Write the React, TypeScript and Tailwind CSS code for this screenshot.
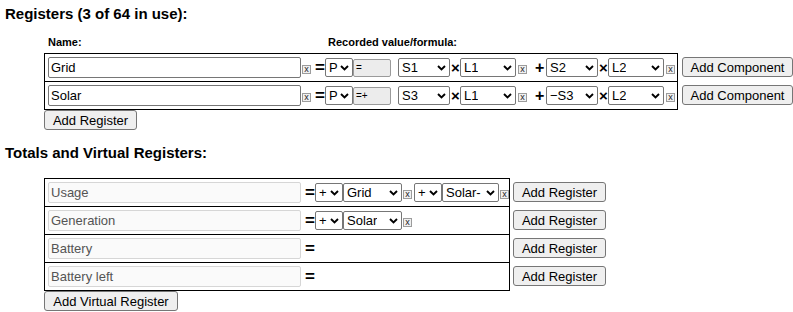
import React from "react";

// small chevron like the native select arrow
function Chevron() {
  return (
    <svg width="9" height="6" viewBox="0 0 9 6" className="shrink-0">
      <path d="M1 1 L4.5 4.5 L8 1" fill="none" stroke="#000" strokeWidth="1.9" />
    </svg>
  );
}

function Select({ value, w }: { value: string; w: string }) {
  return (
    <div
      className={`${w} h-[19px] shrink-0 border border-[#767676] rounded-[2px] bg-white flex items-center justify-between pl-[3px] pr-[3px] text-[13px] leading-none`}
    >
      <span className="whitespace-nowrap overflow-hidden">{value}</span>
      <Chevron />
    </div>
  );
}

function XBox({ ml }: { ml: string }) {
  return (
    <span
      className={`${ml} w-[9px] h-[9px] mt-[4px] shrink-0 border border-[#9c9c9c] bg-[#f0f0f0] flex items-center justify-center text-[9px] leading-none text-[#222] pb-[1px]`}
    >
      x
    </span>
  );
}

function Eq({ ml }: { ml: string }) {
  return (
    <span className={`${ml} w-[10px] shrink-0 text-[17px] font-bold leading-none text-center`}>=</span>
  );
}

function Times() {
  return <span className="ml-[1px] w-[9px] shrink-0 text-[15px] font-bold leading-none text-center">×</span>;
}

function Btn({ label, w }: { label: string; w: string }) {
  return (
    <button
      className={`${w} h-[20px] shrink-0 border border-[#767676] rounded-[3px] bg-[#efefef] text-[13px] leading-none text-black whitespace-nowrap`}
    >
      {label}
    </button>
  );
}

type Reg = { name: string; formula: string; a: string; b: string; c: string; d: string };

const registers: Reg[] = [
  { name: "Grid", formula: "=", a: "S1", b: "L1", c: "S2", d: "L2" },
  { name: "Solar", formula: "=+", a: "S3", b: "L1", c: "\u2212S3", d: "L2" },
];

const virtuals = [
  { name: "Usage", parts: [{ op: "+", reg: "Grid" }, { op: "+", reg: "Solar-" }] },
  { name: "Generation", parts: [{ op: "+", reg: "Solar" }] },
  { name: "Battery", parts: [] as { op: string; reg: string }[] },
  { name: "Battery left", parts: [] as { op: string; reg: string }[] },
];

export default function App() {
  return (
    <div className="w-[793px] h-[312px] overflow-hidden bg-white text-black font-['Liberation_Sans',Arial,sans-serif]">
      <div className="pl-[5px] pt-[5px] text-[15px] font-bold leading-[18px]">Registers (3 of 64 in use):</div>

      {/* column labels */}
      <div className="mt-[13px] h-[13px] flex text-[11px] font-bold leading-[13px]">
        <span className="ml-[48px] w-[280px]">Name:</span>
        <span>Recorded value/formula:</span>
      </div>

      <div className="mt-[4px] ml-[44px] flex">
        <div className="w-[634px] border-x border-b border-black">
          {registers.map((r) => (
            <div key={r.name} className="h-[28px] border-t border-black flex items-center pl-[3px]">
              <input
                readOnly
                value={r.name}
                className="w-[253px] h-[21px] shrink-0 border border-[#767676] rounded-[2px] px-[2px] text-[13px] outline-none"
              />
              <XBox ml="ml-[1px]" />
              <Eq ml="ml-[4px]" />
              <Select value="P" w="w-[28px]" />
              <div className="w-[38px] h-[18px] shrink-0 border border-[#9a9a9a] rounded-[2px] bg-[#ececec] text-[10px] leading-[16px] pl-[2px]">
                {r.formula}
              </div>
              <div className="ml-[7px] flex items-center">
                <Select value={r.a} w="w-[52px]" />
                <Times />
                <Select value={r.b} w="w-[56px]" />
                <XBox ml="ml-[2px]" />
                <span className="ml-[8px] w-[9px] shrink-0 text-[16px] font-bold leading-none text-center">+</span>
                <span className="ml-[2px]" />
                <Select value={r.c} w="w-[52px]" />
                <Times />
                <Select value={r.d} w="w-[56px]" />
                <XBox ml="ml-[2px]" />
              </div>
            </div>
          ))}
        </div>
        <div className="ml-[4px] flex flex-col">
          {registers.map((r) => (
            <div key={r.name} className="h-[28px] flex items-center">
              <Btn label="Add Component" w="w-[111px]" />
            </div>
          ))}
        </div>
      </div>
      <div className="ml-[44px] flex">
        <Btn label="Add Register" w="w-[93px]" />
      </div>

      <div className="mt-[14px] pl-[5px] text-[15px] font-bold leading-[18px]">Totals and Virtual Registers:</div>

      <div className="mt-[16px] ml-[44px] flex">
        <div className="w-[466px] border-x border-b border-black">
          {virtuals.map((v) => (
            <div key={v.name} className="h-[28px] border-t border-black flex items-center pl-[3px]">
              <input
                disabled
                value={v.name}
                className="w-[253px] h-[21px] shrink-0 border border-[#d6d6d6] rounded-[2px] bg-[#fafafa] px-[2px] text-[13px] text-[#545454]"
              />
              <Eq ml="ml-[4px]" />
              {v.parts.map((p, i) => (
                <div key={i} className={i === 0 ? "flex items-center" : "ml-[2px] flex items-center"}>
                  <Select value={p.op} w="w-[28px]" />
                  <Select value={p.reg} w={p.reg === "Solar-" ? "w-[57px]" : "w-[59px]"} />
                  <XBox ml="ml-[1px]" />
                </div>
              ))}
            </div>
          ))}
        </div>
        <div className="ml-[3px] flex flex-col">
          {virtuals.map((v) => (
            <div key={v.name} className="h-[28px] flex items-center">
              <Btn label="Add Register" w="w-[93px]" />
            </div>
          ))}
        </div>
      </div>
      <div className="ml-[44px] flex">
        <Btn label="Add Virtual Register" w="w-[134px]" />
      </div>
    </div>
  );
}
